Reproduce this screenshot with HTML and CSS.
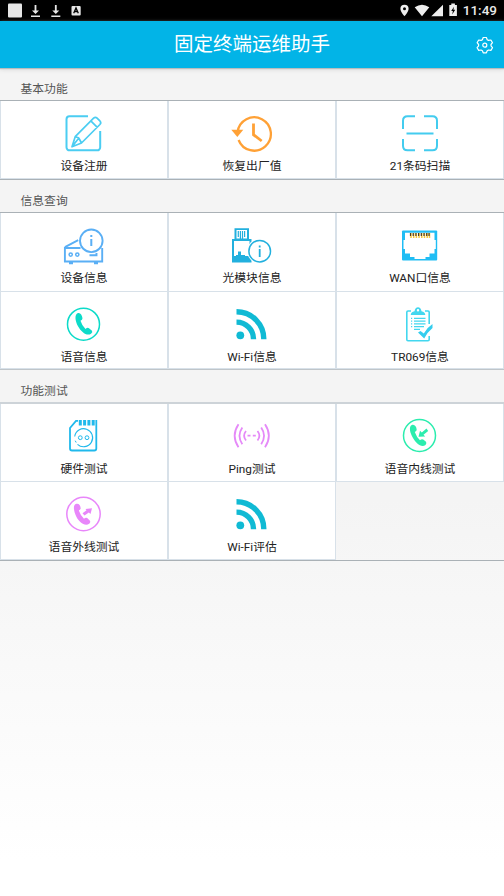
FILE: index.html
```html
<!DOCTYPE html>
<html lang="zh-CN">
<head>
<meta charset="utf-8">
<title>固定终端运维助手</title>
<link rel="stylesheet" href="styles.css">
</head>
<body>
<div class="status">
  <svg width="90" height="21" viewBox="0 0 90 21" fill="#e6e6e6">
    <rect x="8" y="3.500" width="14" height="14" rx="1"/>
    <path d="M34.600 5h1.800v5.500H39L35.500 14 32 10.500h2.600zM31 15.600h9V17h-9zM54.900 5h1.800v5.500h2.600L55.800 14l-3.500-3.500h2.600zM51.300 15.600h9V17h-9z"/>
    <rect x="71.500" y="6" width="9.200" height="9.500" rx="1"/>
    <path d="M73.700 13.300L76 8l2.300 5.300M74.700 11.500h2.600" fill="none" stroke="#000" stroke-width="1.300"/>
  </svg>
  <div class="status-right">
    <svg width="64" height="21" viewBox="396 0 64 21" fill="#eee">
      <path fill-rule="evenodd" d="M404.500 4.700a4.100 4.100 0 0 0-4.100 4.100c0 3 4.100 7.500 4.100 7.500s4.100-4.500 4.100-7.500a4.100 4.100 0 0 0-4.100-4.100zm0 2.600a1.500 1.500 0 1 1 0 3 1.500 1.500 0 0 1 0-3z"/>
      <path d="M414.700 7.300Q422 2.200 429.300 7.300L422 16.300zM443 4.700V16.200H431.300z"/>
      <path d="M449.300 5h2V3.600h3.600V5h2v11h-7.600z"/>
      <path d="M454 6.700l-2.800 4.200h1.700l-.7 3.500 3-4.600h-1.800l.6-3.100z" fill="#000"/>
    </svg>
    <span class="time">11:49</span>
  </div>
</div>
<header class="header">
  <h1>固定终端运维助手</h1>
  <svg class="gear" width="18" height="18" viewBox="0 0 18 18" fill="none" stroke="#fff" stroke-width="1.200" stroke-linejoin="round">
    <path d="M7.200 1.500h3.200l.8 2.200 1.300.7 2.400-.4 1.600 2.700-1.500 1.800v1.400l1.500 1.800-1.600 2.700-2.400-.4-1.300.7-.8 2.100H7.200l-.8-2.100-1.300-.7-2.400.4-1.600-2.700 1.500-1.800V8.500L1.100 6.700 2.700 4l2.400.4 1.300-.7z"/>
    <circle cx="8.800" cy="9.200" r="2"/>
  </svg>
</header>
<main>
  <section>
    <h2>基本功能</h2>
    <div class="grid">
      <div class="cell">
        <svg class="icon" viewBox="0 0 48 44" stroke="#4bcdf2" stroke-width="2">
          <path d="M28 5.300H9.500a3 3 0 0 0-3 3v28a3 3 0 0 0 3 3H37.200a3 3 0 0 0 3-3V20"/>
          <path stroke-width="1.700" stroke-linejoin="round" d="M12 35.800L15.200 25.700 33.600 7.200Q35.400 5.500 37.100 7.200L40.100 10.200Q41.500 11.800 39.900 13.500L21.500 32zM30.800 9.800l6.500 6.500M15.200 25.700l3.300 1 1.100 1.800 1.900 3.500M18.500 27.500L12 35.800"/>
        </svg>
        <span>设备注册</span>
      </div>
      <div class="cell">
        <svg class="icon" viewBox="0 0 48 44" stroke="#ffa136" stroke-width="2.300">
          <path d="M9.600 21A16.700 16.700 0 1 1 10.600 29"/>
          <path d="M25.500 12.500V23.700L33.700 30" stroke-width="2.800"/>
          <path d="M3.300 18.700H15.300L9.300 26z" fill="#ffa136" stroke="none"/>
        </svg>
        <span>恢复出厂值</span>
      </div>
      <div class="cell">
        <svg class="icon" viewBox="0 0 48 44" stroke="#43ccef" stroke-width="2">
          <path d="M19 5.300H11.500Q7 5.300 7 9.800V18M28 5.300H36.500Q41 5.300 41 9.800V18M19 39.200H11.500Q7 39.200 7 34.700V28M28 39.200H36.500Q41 39.200 41 34.700V28M10.500 22.500H37.500"/>
        </svg>
        <span>21条码扫描</span>
      </div>
    </div>
  </section>
  <section>
    <h2>信息查询</h2>
    <div class="grid info">
      <div class="cell">
        <svg class="icon" viewBox="0 0 48 44" stroke="#5aaff5" stroke-width="1.900">
          <path d="M20.500 25H4.900V38.500H42.200V25M4.900 24.200L18.200 17.200M9 40.200h4M34 40.200h4" />
          <path d="M29.500 32.200H36.500V30"/>
          <circle cx="10.700" cy="31.600" r="1.600" stroke-width="1.500"/><circle cx="17.300" cy="31.600" r="1.600" stroke-width="1.500"/>
          <circle cx="31.300" cy="17.800" r="11.300"/>
          <path d="M31.300 16v7M31.300 12v2" stroke-width="2"/>
        </svg>
        <span>设备信息</span>
      </div>
      <div class="cell">
        <svg class="icon" viewBox="0 0 48 44">
          <path fill="#22b0de" fill-rule="evenodd" d="M6.500 5.200H21V16H23.500V39.500H4V16H6.500zM8.500 7v8.500H19V7zM6 18V33H8V32H10V28.500H13V32H17V33H21.500V18z"/>
          <path d="M10.300 8v6M12.400 8v8M14.500 8v8M16.600 8v6" stroke="#22b0de" stroke-width="1.200"/>
          <circle cx="31.700" cy="28.200" r="12.500" fill="#fff"/>
          <circle cx="31.700" cy="28.200" r="10.800" stroke="#22b0de" stroke-width="1.500"/>
          <path d="M31.700 26v8M31.700 22.500v2" stroke="#22b0de" stroke-width="1.800"/>
        </svg>
        <span>光模块信息</span>
      </div>
      <div class="cell">
        <svg class="icon" viewBox="0 0 48 44">
          <rect x="6" y="7.500" width="35.200" height="30" rx="1" fill="#20bdf4"/>
          <path fill="#fff" d="M9 9.700H38.500V17H39.800V26H38.500V30.500H33.500V34H29.500V36H18.500V34H14V30.500H9V26H7.500V17H9z"/>
          <path stroke="#f8c83c" stroke-width="1.500" d="M15 10v5M17.700 10v5M20.400 10v5M23.100 10v5M25.800 10v5M28.500 10v5M31.200 10v5M33.500 10v5"/>
          <path stroke="#493a23" stroke-width="1.200" d="M14.500 10v3M17.200 10v3M19.900 10v3M22.600 10v3M25.300 10v3M28 10v3M30.700 10v3M33 10v3"/>
        </svg>
        <span>WAN口信息</span>
      </div>
      <div class="cell">
        <svg class="icon" viewBox="0 0 48 44">
          <circle cx="23.500" cy="22.200" r="16" stroke="#0cdbc9" stroke-width="1.500"/>
          <path fill="#0cdbc9" d="M17.500 11.200C20 9.900 22 12.700 22.500 16.200Q22.500 17.900 20.500 18.700Q22 23.700 25.500 27Q27.500 25.200 29 26.200L32 28.700Q33 30.200 31 31.700C27 34.700 21 29.700 18 24.200C15 18.700 14.500 12.700 17.500 11.200z"/>
        </svg>
        <span>语音信息</span>
      </div>
      <div class="cell">
        <svg class="icon" viewBox="0 0 48 44" stroke="#10bad4" stroke-width="5.400">
          <path d="M8.500 9.700A27.300 27.300 0 0 1 35.800 37.300M8.500 20.100A17 17 0 0 1 25.500 37.300"/>
          <circle cx="12.300" cy="33.300" r="3.900" fill="#10bad4" stroke="none"/>
        </svg>
        <span>Wi-Fi信息</span>
      </div>
      <div class="cell">
        <svg class="icon" viewBox="0 0 48 44" stroke="#43d7ef" stroke-width="1.600">
          <path d="M15 9H12a1.200 1.200 0 0 0-1.200 1.200V37.500a1.200 1.200 0 0 0 1.200 1.200H32a1.200 1.200 0 0 0 1.200-1.200V34M33.200 22V10.200A1.200 1.200 0 0 0 32 9H29"/>
          <path fill="#43d7ef" fill-rule="evenodd" stroke="none" d="M14.700 13Q15 9.800 18.500 9.300Q19.200 5.200 22 5.200T25.500 9.300Q29 9.800 29.300 13zM22 7a1.200 1.200 0 1 0 0 2.400 1.200 1.200 0 0 0 0-2.400z"/>
          <path stroke-width="1.200" d="M18 16.300H29.500M18 19.100H29.500M18 21.900H29.500M18 24.700H28M18 27.300H24M15 16.300h1.200M15 19.100h1.200M15 21.900h1.200M15 24.700h1.200"/>
          <path fill="#35cdee" stroke="none" d="M22 30.500L24.500 29L27.800 31.500Q31 25.500 36.500 22V26Q31.500 30 28.200 36.500z"/>
        </svg>
        <span>TR069信息</span>
      </div>
    </div>
  </section>
  <section>
    <h2>功能测试</h2>
    <div class="grid last">
      <div class="cell">
        <svg class="icon" viewBox="0 0 48 44" stroke="#20b9ec">
          <path stroke-width="1.800" d="M18 6.800H16L10 14V34.500a2 2 0 0 0 2 2H34.300a2 2 0 0 0 2-2V6"/>
          <path stroke-width="3" d="M20.300 6v5.500M24.600 6v5.500M28.900 6v5.500M33.200 6v5.500"/>
          <path stroke-width="1.100" d="M14.700 22.500A9 9 0 1 1 17.500 30.300"/>
          <circle cx="20.300" cy="23.700" r="1.900"/><circle cx="27" cy="23.700" r="1.900"/>
          <path d="M15.200 26.700l1 1.800"/>
        </svg>
        <span>硬件测试</span>
      </div>
      <div class="cell">
        <svg class="icon" viewBox="0 0 48 44" stroke="#e58af8" stroke-width="1.800">
          <path d="M10.500 10.300Q2.800 21.800 10.500 33.200M14.300 13.500Q8.600 21.800 14.300 30.200M18 17Q14.200 21.800 18 26.500M37 10.300Q44.700 21.800 37 33.200M33.200 13.500Q38.900 21.800 33.200 30.200M29.500 17Q33.300 21.800 29.500 26.500M19.500 21.700h3M24.800 21.700h3"/>
        </svg>
        <span>Ping测试</span>
      </div>
      <div class="cell">
        <svg class="icon" viewBox="0 0 48 44">
          <circle cx="23.500" cy="21.500" r="16" stroke="#2bedae" stroke-width="1.500"/>
          <path transform="translate(0 -1)" fill="#2bedae" d="M15.800 12C18.500 11 20.500 13.300 20.700 17Q20.500 18.200 18.800 19Q20.500 24 24 27.200Q25.500 25.800 27.200 26.500L30 28.800Q31 30 29.500 32C25 35 20 30 17 25C14 20 12.500 13.700 15.800 12zM30.500 15.600L32.200 18 27.500 21.800 29.200 23.500 22.500 23.800 24 17.800 25.800 19.500z"/>
        </svg>
        <span>语音内线测试</span>
      </div>
      <div class="cell">
        <svg class="icon" viewBox="0 0 48 44">
          <circle cx="23.500" cy="22" r="16.700" stroke="#e886fa" stroke-width="1.500"/>
          <path transform="translate(0 -.5)" fill="#e886fa" d="M15.800 12.500C18.500 11.500 20.500 13.800 20.700 17Q20.500 18.200 18.800 19Q20.500 24 24 27.200Q25.500 25.800 27.200 26.500L29.500 28.800Q31 30 29.500 32C25 35.500 19 30.500 16.500 25.500C14 20.500 12.500 14 15.800 12.500zM22.500 21.700L26.500 18.800 25.500 17.500 32 16.800 30.500 22.500 28.800 21 24.500 24z"/>
        </svg>
        <span>语音外线测试</span>
      </div>
      <div class="cell">
        <svg class="icon" viewBox="0 0 48 44" stroke="#10bad4" stroke-width="5.400">
          <path d="M8.500 9.700A27.300 27.300 0 0 1 35.800 37.300M8.500 20.100A17 17 0 0 1 25.500 37.300"/>
          <circle cx="12.300" cy="33.300" r="3.900" fill="#10bad4" stroke="none"/>
        </svg>
        <span>Wi-Fi评估</span>
      </div>
    </div>
  </section>
</main>
</body>
</html>
```
FILE: styles.css
```css
* { box-sizing: border-box; }
body {
  margin: 0;
  height: 896px;
  overflow: hidden;
  font-family: Roboto, "Noto Sans CJK SC", sans-serif;
  background: linear-gradient(#f4f4f4 0, #f4f4f4 500px, #fff 860px);
}
svg { display: block; flex: none; }
.status {
  height: 21px;
  background: #000;
  display: flex;
  justify-content: space-between;
}
.status-right { display: flex; padding-right: 7px; }
.time {
  width: 37px;
  text-align: right;
  color: #e8e8e8;
  font-size: 13.500px;
  font-weight: 500;
  line-height: 21px;
}
.header {
  height: 47px;
  background: #02b4e7;
  display: grid;
  grid-template-columns: 1fr auto 1fr;
  align-items: center;
  box-shadow: 0 1px 1px #b9bdbe, 0 2px 4px #ddd;
}
h1 {
  grid-column: 2;
  margin: 0;
  font-size: 19.500px;
  font-weight: 400;
  line-height: 48px;
  color: #fff;
}
.gear { justify-self: end; margin-right: 10px; }
h2 {
  margin: 0;
  height: 32px;
  padding: 5px 0 0 20.500px;
  font-size: 11.800px;
  font-weight: 400;
  line-height: 32px;
  color: #555;
}
.grid {
  display: grid;
  grid-template-columns: repeat(3, 168px);
  grid-auto-rows: 78px;
  border-top: 1px solid #aab1b6;
  border-bottom: 1px solid #aab1b6;
}
.info {
  grid-template-rows: 79px 77px;
  border-bottom-color: #bfc5c9;
}
.last { border-top: 2px solid #cdd3d8; }
.cell {
  background: #fff;
  border: 1px solid #d8e1e9;
  border-top: 0;
  padding-top: 10px;
  display: flex;
  flex-direction: column;
  align-items: center;
}
.icon { width: 48px; height: 44px; fill: none; }
.cell span {
  font-size: 11.800px;
  line-height: 22px;
  color: #222;
  white-space: nowrap;
}
```
